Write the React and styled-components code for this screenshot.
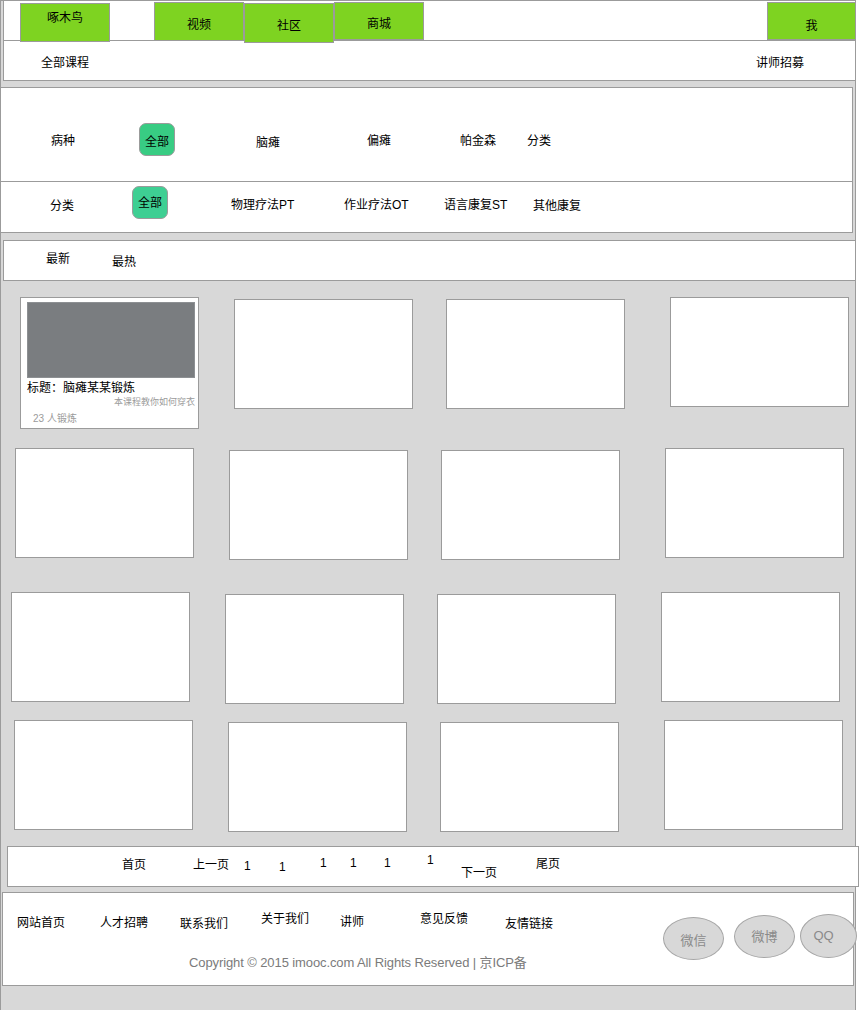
import React from "react";
import styled, { createGlobalStyle } from "styled-components";

const LINE = "#9b9b9b";
const GREEN = "#7ed321";

const GlobalStyle = createGlobalStyle`
  html, body { margin: 0; padding: 0; background: #fff; }
  body { font-family: "Liberation Sans", "Noto Sans CJK SC", sans-serif; }
  *, *::before, *::after { box-sizing: border-box; }
`;

const Page = styled.div`
  width: 856px;
  min-height: 1010px;
  background: #d8d8d8;
  border: 1px solid ${LINE};
  border-bottom: none;
  font-size: 12px;
  line-height: 14px;
  color: #000;
`;

/* ---------- header ---------- */
const Header = styled.header`
  margin-left: 2px;
  width: 853px;
  background: #fff;
  border-left: 1px solid ${LINE};
  border-right: 1px solid ${LINE};
`;

const NavRow = styled.nav`
  display: flex;
  align-items: flex-start;
  height: 40px;
  border-bottom: 1px solid ${LINE};
`;

const NavTab = styled.div`
  flex-shrink: 0;
  width: ${(p) => p.$w || 90}px;
  height: ${(p) => p.$h}px;
  margin-top: ${(p) => p.$top}px;
  margin-left: ${(p) => (p.$ml === "auto" ? "auto" : `${p.$ml}px`)};
  margin-right: ${(p) => p.$mr || 0}px;
  padding-top: ${(p) => p.$pt}px;
  background: ${GREEN};
  border: 1px solid ${LINE};
  text-align: center;
`;

const SubRow = styled.div`
  display: flex;
  justify-content: space-between;
  height: 40px;
  padding: 15px 51px 0 37px;
  border-bottom: 1px solid ${LINE};
`;

/* ---------- filter ---------- */
const FilterPanel = styled.section`
  margin-top: 6px;
  margin-left: -1px;
  width: 853px;
  background: #fff;
  border: 1px solid ${LINE};
`;

const FilterRow = styled.div`
  display: grid;
  grid-template-columns: ${(p) => p.$cols};
  align-items: start;
  height: ${(p) => p.$h}px;
  padding-left: ${(p) => p.$pl}px;
  border-bottom: ${(p) => (p.$divider ? `1px solid ${LINE}` : "none")};
`;

const FilterText = styled.span`
  margin-top: ${(p) => p.$top}px;
  white-space: nowrap;
`;

const Pill = styled.span`
  display: flex;
  justify-content: center;
  align-items: center;
  width: 36px;
  height: 33px;
  margin-top: ${(p) => p.$top}px;
  padding-top: ${(p) => p.$pt}px;
  background: ${(p) => p.$bg};
  border: 1px solid ${LINE};
  border-radius: 7px;
`;

/* ---------- sort ---------- */
const SortBar = styled.div`
  display: grid;
  grid-template-columns: 66px auto;
  align-items: start;
  margin-top: 7px;
  margin-left: 2px;
  width: 853px;
  height: 41px;
  padding-left: 42px;
  background: #fff;
  border: 1px solid ${LINE};
`;

const SortText = styled.span`
  margin-top: ${(p) => p.$top}px;
`;

/* ---------- cards ---------- */
const CardRow = styled.div`
  display: grid;
  grid-template-columns: 214px 212px 224px 179px;
  align-items: start;
  margin-top: ${(p) => p.$mt}px;
  padding-left: ${(p) => p.$pl}px;
`;

const Card = styled.div`
  width: 179px;
  height: ${(p) => (p.$tall ? 132 : 110)}px;
  margin-top: ${(p) => p.$drop}px;
  background: #fff;
  border: 1px solid ${LINE};
`;

const Thumb = styled.div`
  width: 168px;
  height: 76px;
  margin: 4px 0 0 6px;
  background: #7a7d80;
  border: 1px solid #8d9093;
`;

const CardTitle = styled.div`
  margin: 3px 0 0 6px;
  font-size: 12px;
  line-height: 14px;
  white-space: nowrap;
`;

const CardDesc = styled.div`
  margin-top: 2px;
  padding-right: 3px;
  text-align: right;
  font-size: 9px;
  line-height: 11px;
  color: #9b9b9b;
  white-space: nowrap;
`;

const CardStats = styled.div`
  margin: 5px 0 0 12px;
  font-size: 10px;
  line-height: 12px;
  color: #9b9b9b;
`;

/* ---------- pager ---------- */
const Pager = styled.div`
  display: grid;
  grid-template-columns: 71px 51px 35px 41px 30px 34px 43px 34px 75px auto;
  align-items: start;
  margin-top: 14px;
  margin-left: 6px;
  width: 852px;
  height: 41px;
  padding-left: 114px;
  background: #fff;
  border: 1px solid ${LINE};
`;

const PageLink = styled.span`
  margin-top: ${(p) => p.$top}px;
  white-space: nowrap;
`;

/* ---------- footer ---------- */
const Footer = styled.footer`
  display: flex;
  margin-top: 5px;
  margin-left: 1px;
  width: 852px;
  height: 94px;
  background: #fff;
  border: 1px solid ${LINE};
`;

const FooterMain = styled.div`
  width: 660px;
  flex-shrink: 0;
`;

const FooterLinks = styled.div`
  display: grid;
  grid-template-columns: 83px 80px 81px 79px 80px 85px auto;
  align-items: start;
  height: 40px;
  padding-left: 14px;
`;

const FooterLink = styled.span`
  margin-top: ${(p) => p.$top}px;
  white-space: nowrap;
`;

const Copyright = styled.div`
  margin: 22px 0 0 186px;
  font-size: 13px;
  line-height: 16px;
  letter-spacing: -0.1px;
  color: #7b7b7b;
  white-space: nowrap;
`;

const Socials = styled.div`
  display: flex;
  align-items: flex-start;
  flex-shrink: 0;
`;

const SocialBadge = styled.span`
  display: flex;
  justify-content: center;
  align-items: center;
  flex-shrink: 0;
  width: ${(p) => p.$w}px;
  height: ${(p) => p.$h}px;
  margin-top: ${(p) => p.$top}px;
  margin-left: ${(p) => p.$ml}px;
  padding-top: ${(p) => p.$pt}px;
  padding-right: ${(p) => p.$pr || 0}px;
  border-radius: 50%;
  background: #d8d8d8;
  border: 1px solid #a6a6a6;
  color: #8a8a8a;
  font-size: 13px;
`;

/* ---------- data ---------- */
const navTabs = [
  { label: "啄木鸟", ml: 16, top: 2, h: 39, pt: 7 },
  { label: "视频", ml: 44, top: 1, h: 39, pt: 15 },
  { label: "社区", ml: 0, top: 2, h: 40, pt: 15 },
  { label: "商城", ml: 0, top: 1, h: 38, pt: 14 },
  { label: "我", ml: "auto", top: 1, h: 38, pt: 16, w: 89, mr: -1 },
];

const diseaseRow = [
  { label: "病种", top: 46 },
  { label: "全部", top: 35, pill: "#38cc83", pt: 4 },
  { label: "脑瘫", top: 48 },
  { label: "偏瘫", top: 46 },
  { label: "帕金森", top: 46 },
  { label: "分类", top: 46 },
];

const typeRow = [
  { label: "分类", top: 17 },
  { label: "全部", top: 4, pill: "#3ecf93", pt: 0 },
  { label: "物理疗法PT", top: 16 },
  { label: "作业疗法OT", top: 16 },
  { label: "语言康复ST", top: 16 },
  { label: "其他康复", top: 17 },
];

const cardRows = [
  { mt: 16, pl: 19 },
  { mt: 19, pl: 14 },
  { mt: 32, pl: 10 },
  { mt: 16, pl: 13 },
];
const drops = [0, 2, 2, 0];

const pages = [
  { label: "首页", top: 11 },
  { label: "上一页", top: 11 },
  { label: "1", top: 12 },
  { label: "1", top: 13 },
  { label: "1", top: 9 },
  { label: "1", top: 9 },
  { label: "1", top: 9 },
  { label: "1", top: 6 },
  { label: "下一页", top: 19 },
  { label: "尾页", top: 10 },
];

const footerLinks = [
  { label: "网站首页", top: 23 },
  { label: "人才招聘", top: 23 },
  { label: "联系我们", top: 24 },
  { label: "关于我们", top: 19 },
  { label: "讲师", top: 22 },
  { label: "意见反馈", top: 19 },
  { label: "友情链接", top: 24 },
];

const socials = [
  { label: "微信", w: 61, h: 43, top: 24, ml: 0, pt: 4 },
  { label: "微博", w: 61, h: 43, top: 22, ml: 10, pt: 0 },
  { label: "QQ", w: 57, h: 44, top: 21, ml: 5, pt: 0, pr: 10 },
];

function FilterItems({ items }) {
  return items.map((it, i) =>
    it.pill ? (
      <Pill key={i} $top={it.top} $bg={it.pill} $pt={it.pt}>
        {it.label}
      </Pill>
    ) : (
      <FilterText key={i} $top={it.top}>
        {it.label}
      </FilterText>
    )
  );
}

export default function App() {
  return (
    <>
      <GlobalStyle />
      <Page>
        <Header>
          <NavRow>
            {navTabs.map((t) => (
              <NavTab
                key={t.label}
                $ml={t.ml}
                $top={t.top}
                $h={t.h}
                $pt={t.pt}
                $w={t.w}
                $mr={t.mr}
              >
                {t.label}
              </NavTab>
            ))}
          </NavRow>
          <SubRow>
            <span>全部课程</span>
            <span>讲师招募</span>
          </SubRow>
        </Header>

        <FilterPanel>
          <FilterRow
            $divider
            $h={94}
            $pl={50}
            $cols="88px 117px 111px 93px 67px auto"
          >
            <FilterItems items={diseaseRow} />
          </FilterRow>
          <FilterRow $h={50} $pl={49} $cols="82px 99px 113px 100px 89px auto">
            <FilterItems items={typeRow} />
          </FilterRow>
        </FilterPanel>

        <SortBar>
          <SortText $top={11}>最新</SortText>
          <SortText $top={14}>最热</SortText>
        </SortBar>

        {cardRows.map((row, r) => (
          <CardRow key={r} $mt={row.mt} $pl={row.pl}>
            {drops.map((d, c) =>
              r === 0 && c === 0 ? (
                <Card key={c} $tall $drop={d}>
                  <Thumb />
                  <CardTitle>标题：脑瘫某某锻炼</CardTitle>
                  <CardDesc>本课程教你如何穿衣</CardDesc>
                  <CardStats>23 人锻炼</CardStats>
                </Card>
              ) : (
                <Card key={c} $drop={d} />
              )
            )}
          </CardRow>
        ))}

        <Pager>
          {pages.map((p, i) => (
            <PageLink key={i} $top={p.top}>
              {p.label}
            </PageLink>
          ))}
        </Pager>

        <Footer>
          <FooterMain>
            <FooterLinks>
              {footerLinks.map((l) => (
                <FooterLink key={l.label} $top={l.top}>
                  {l.label}
                </FooterLink>
              ))}
            </FooterLinks>
            <Copyright>
              Copyright © 2015 imooc.com All Rights Reserved | 京ICP备
            </Copyright>
          </FooterMain>
          <Socials>
            {socials.map((s) => (
              <SocialBadge
                key={s.label}
                $w={s.w}
                $h={s.h}
                $top={s.top}
                $ml={s.ml}
                $pt={s.pt}
                $pr={s.pr}
              >
                {s.label}
              </SocialBadge>
            ))}
          </Socials>
        </Footer>
      </Page>
    </>
  );
}
